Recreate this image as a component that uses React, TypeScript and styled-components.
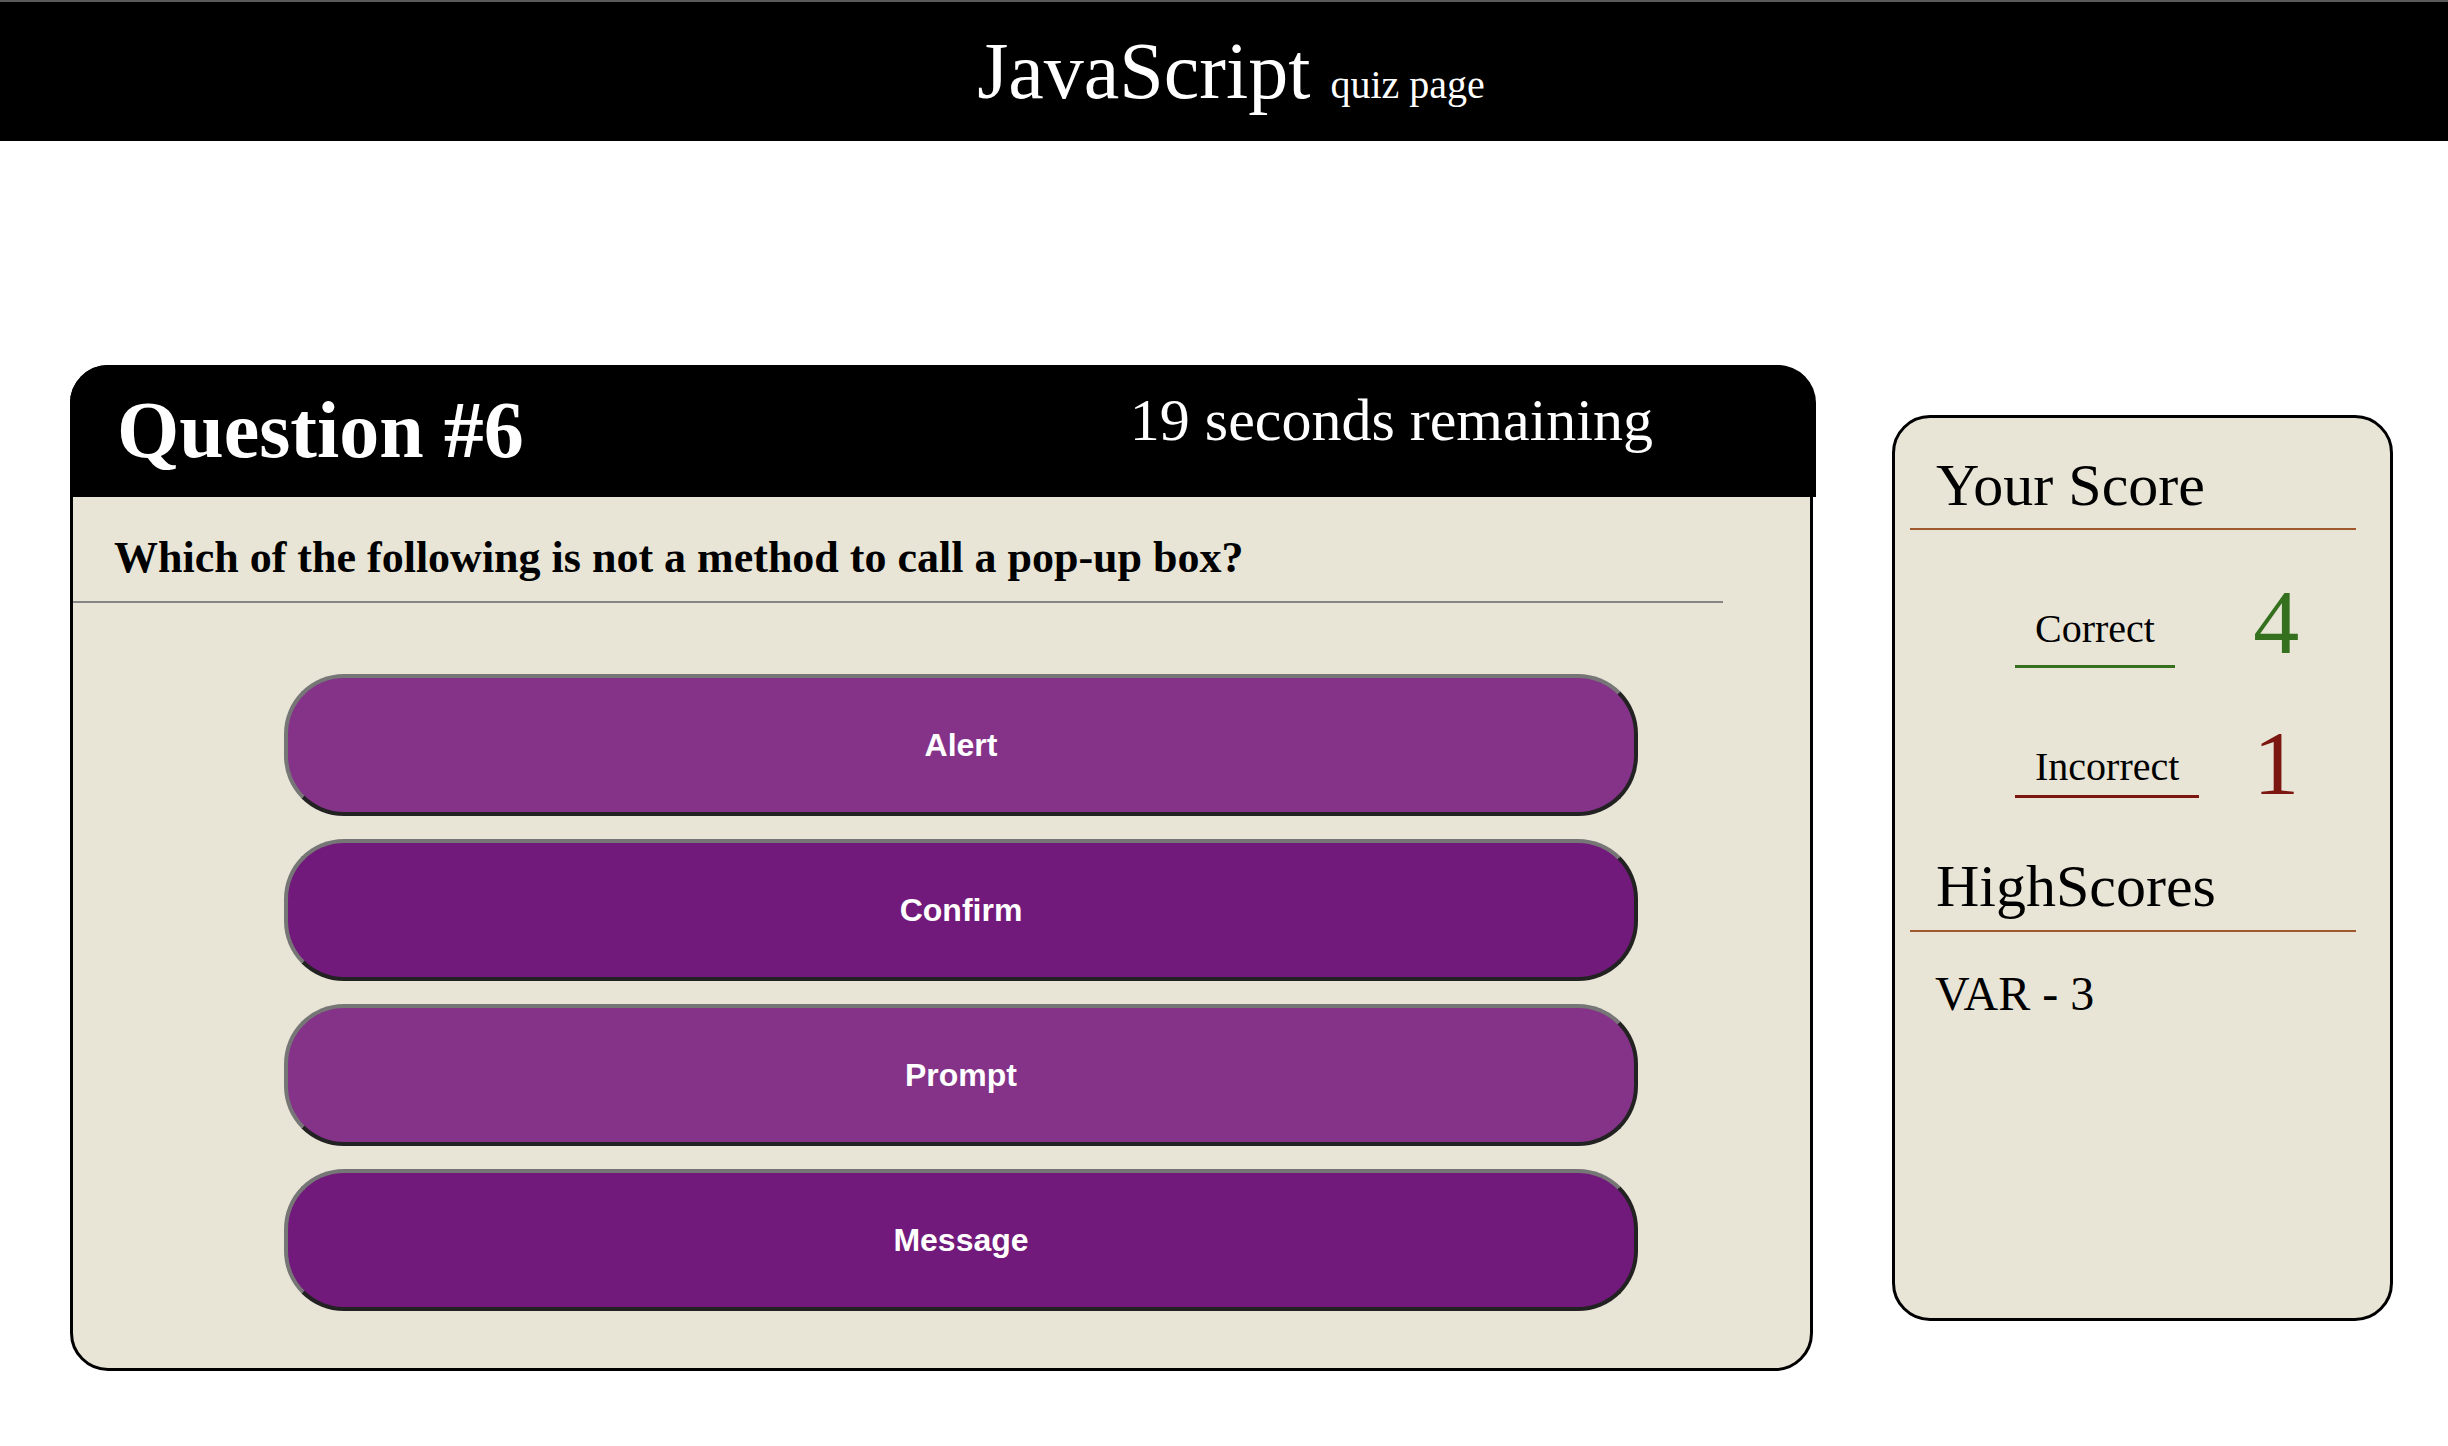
import React from "react";
import styled, { createGlobalStyle } from "styled-components";

const GlobalStyle = createGlobalStyle`
  html, body {
    margin: 0;
    padding: 0;
    background: #ffffff;
  }
  body {
    font-family: "Liberation Serif", "Times New Roman", serif;
  }
  * {
    box-sizing: border-box;
  }
`;

const Header = styled.header`
  height: 141px;
  background: #000;
  border-top: 2px solid #595959;
  display: flex;
  justify-content: center;
  align-items: flex-start;
  padding: 29px 0 0 14px;
`;

const Title = styled.h1`
  margin: 0;
  font-weight: normal;
  font-size: 80px;
  line-height: 1;
  color: #fff;
`;

const Subtitle = styled.span`
  font-size: 40px;
`;

const Main = styled.main`
  display: flex;
  align-items: center;
  gap: 79px;
  padding: 224px 0 0 70px;
`;

const QuizCard = styled.section`
  width: 1743px;
  border: 3px solid #000;
  border-radius: 38px;
  background: #e8e5d7;
  padding-bottom: 57px;
`;

const CardHeader = styled.div`
  height: 132px;
  margin: -3px -6px 0 -3px;
  background: #000;
  border-radius: 38px 38px 0 0;
  display: flex;
  justify-content: space-between;
  align-items: flex-start;
  padding: 0 163px 0 47px;
  color: #fff;
`;

const QuestionTitle = styled.h2`
  margin: 25px 0 0;
  font-size: 80px;
  font-weight: bold;
  line-height: 1;
`;

const Timer = styled.p`
  margin: 25px 0 0;
  font-size: 60px;
  line-height: 1;
`;

const QuestionText = styled.p`
  margin: 39px 0 0 41px;
  font-size: 44px;
  font-weight: bold;
  line-height: 1;
  color: #000;
`;

const Divider = styled.hr`
  margin: 21px 0 0;
  width: 1650px;
  height: 0;
  border: none;
  border-top: 2px solid #858585;
`;

const AnswerList = styled.div`
  display: flex;
  flex-direction: column;
  gap: 23px;
  margin: 71px 0 0 211px;
  width: 1354px;
`;

const AnswerButton = styled.button<{ $tone: "light" | "dark" }>`
  height: 142px;
  width: 100%;
  border-radius: 60px;
  border: 4px solid;
  border-color: #767676 #222222 #222222 #767676;
  background: ${(p) => (p.$tone === "light" ? "#853389" : "#721a7b")};
  color: #fff;
  font-family: "Liberation Sans", Arial, sans-serif;
  font-weight: bold;
  font-size: 32px;
  cursor: pointer;
`;

const ScoreCard = styled.aside`
  width: 501px;
  height: 906px;
  border: 3px solid #000;
  border-radius: 38px;
  background: #e8e5d7;
  display: flex;
  flex-direction: column;
  align-items: flex-start;
`;

const ScoreHeading = styled.h2<{ $top: number }>`
  margin: ${(p) => p.$top}px 0 0 41px;
  font-size: 60px;
  font-weight: normal;
  line-height: 1;
  color: #000;
`;

const ScoreDivider = styled.div<{ $top: number }>`
  margin: ${(p) => p.$top}px 0 0 15px;
  width: 446px;
  border-top: 2px solid #a0592d;
`;

const ScoreGrid = styled.div`
  display: grid;
  grid-template-columns: auto auto;
  justify-content: start;
  justify-items: start;
  align-items: end;
  column-gap: 54px;
  row-gap: 49px;
  margin: 46px 0 0 120px;
`;

const ScoreLabel = styled.span<{ $color: string; $pb: number; $mb: number }>`
  font-size: 40px;
  line-height: 1;
  padding: 0 20px ${(p) => p.$pb}px;
  margin-bottom: ${(p) => p.$mb}px;
  border-bottom: 3px solid ${(p) => p.$color};
  color: #000;
`;

const ScoreValue = styled.span<{ $color: string }>`
  font-size: 92px;
  line-height: 1;
  color: ${(p) => p.$color};
`;

const HighScoreEntry = styled.p`
  margin: 38px 0 0 40px;
  font-size: 48px;
  line-height: 1;
  color: #000;
`;

const answers = ["Alert", "Confirm", "Prompt", "Message"];

const scores = [
  { label: "Correct", value: 4, color: "#35701f", pb: 16, mb: 0 },
  { label: "Incorrect", value: 1, color: "#7b1610", pb: 8, mb: 11 },
];

export default function App() {
  return (
    <>
      <GlobalStyle />
      <Header>
        <Title>
          JavaScript <Subtitle>quiz page</Subtitle>
        </Title>
      </Header>
      <Main>
        <QuizCard>
          <CardHeader>
            <QuestionTitle>Question #6</QuestionTitle>
            <Timer>19 seconds remaining</Timer>
          </CardHeader>
          <QuestionText>
            Which of the following is not a method to call a pop-up box?
          </QuestionText>
          <Divider />
          <AnswerList>
            {answers.map((a, i) => (
              <AnswerButton key={a} $tone={i % 2 === 0 ? "light" : "dark"}>
                {a}
              </AnswerButton>
            ))}
          </AnswerList>
        </QuizCard>
        <ScoreCard>
          <ScoreHeading $top={37}>Your Score</ScoreHeading>
          <ScoreDivider $top={13} />
          <ScoreGrid>
            {scores.map((s) => (
              <React.Fragment key={s.label}>
                <ScoreLabel $color={s.color} $pb={s.pb} $mb={s.mb}>
                  {s.label}
                </ScoreLabel>
                <ScoreValue $color={s.color}>{s.value}</ScoreValue>
              </React.Fragment>
            ))}
          </ScoreGrid>
          <ScoreHeading $top={47}>HighScores</ScoreHeading>
          <ScoreDivider $top={14} />
          <HighScoreEntry>VAR - 3</HighScoreEntry>
        </ScoreCard>
      </Main>
    </>
  );
}
